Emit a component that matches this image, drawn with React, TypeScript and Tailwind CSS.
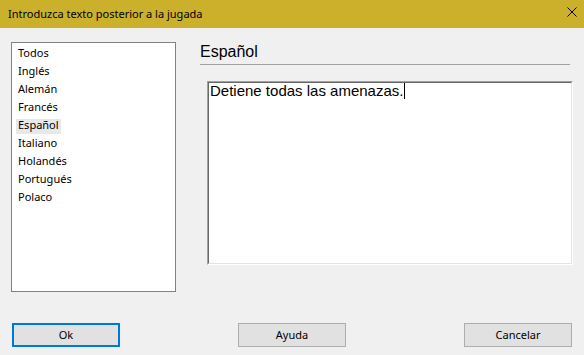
import React from "react";

const items = ["Todos", "Inglés", "Alemán", "Francés", "Español", "Italiano", "Holandés", "Portugués", "Polaco"];

export default function App() {
  return (
    <div className="w-[584px] h-[355px] bg-[#f0f0f0] flex flex-col overflow-hidden" style={{ fontFamily: '"Noto Sans", sans-serif' }}>
      <div className="h-[28px] bg-[#cbb02b] flex justify-between shrink-0">
        <div className="pl-[8px] pt-[6px] text-[11px] leading-[16px] text-black">Introduzca texto posterior a la jugada</div>
        <div className="pt-[7px] pr-[7px]">
          <svg width="10" height="10" viewBox="0 0 10 10">
            <path d="M0.5 0.5 L9.5 9.5 M9.5 0.5 L0.5 9.5" stroke="#000" strokeWidth="1" fill="none" />
          </svg>
        </div>
      </div>
      <div className="flex mt-[14px] pl-[11px]">
        <div className="w-[165px] h-[250px] bg-white border border-[#828282] pt-[4px] pl-[4px] flex flex-col">
          {items.map((it) => (
            <div key={it} className="h-[18px] flex items-start">
              <span className={"block h-[15px] leading-[12px] px-[2px] text-[11px] text-black " + (it === "Español" ? "bg-[#e8e8e8]" : "")}>
                {it}
              </span>
            </div>
          ))}
        </div>
        <div className="ml-[24px] flex flex-col">
          <div className="mt-[1px] h-[22px] w-[370px] border-b border-[#a0a0a0] text-[16px] leading-[18px] text-black" style={{ fontFamily: '"Liberation Sans", Arial, sans-serif' }}>
            Español
          </div>
          <div className="ml-[7px] mt-[16px] w-[366px] h-[184px] bg-white border-t border-l border-t-[#a0a0a0] border-l-[#a0a0a0] border-r border-b border-r-[#ffffff] border-b-[#ffffff]">
            <div className="w-full h-full border-t border-l border-t-[#696969] border-l-[#696969] border-r border-b border-r-[#e3e3e3] border-b-[#e3e3e3] pl-[1px]">
              <div className="text-[15px] leading-[15px] text-black flex items-start" style={{ fontFamily: '"Liberation Sans", Arial, sans-serif' }}>
                <span>Detiene todas las amenazas.</span>
                <span className="inline-block w-[1px] h-[16px] bg-black ml-[1px]" />
              </div>
            </div>
          </div>
        </div>
      </div>
      <div className="flex mt-[31px] pl-[12px]">
        <button className="w-[108px] h-[24px] bg-[#e1e1e1] border-2 border-[#0078d7] text-[11px] text-black leading-[18px]">Ok</button>
        <button className="ml-[118px] w-[108px] h-[24px] bg-[#e1e1e1] border border-[#adadad] text-[11px] text-black leading-[20px]">Ayuda</button>
        <button className="ml-[118px] w-[108px] h-[24px] bg-[#e1e1e1] border border-[#adadad] text-[11px] text-black leading-[20px]">Cancelar</button>
      </div>
    </div>
  );
}
